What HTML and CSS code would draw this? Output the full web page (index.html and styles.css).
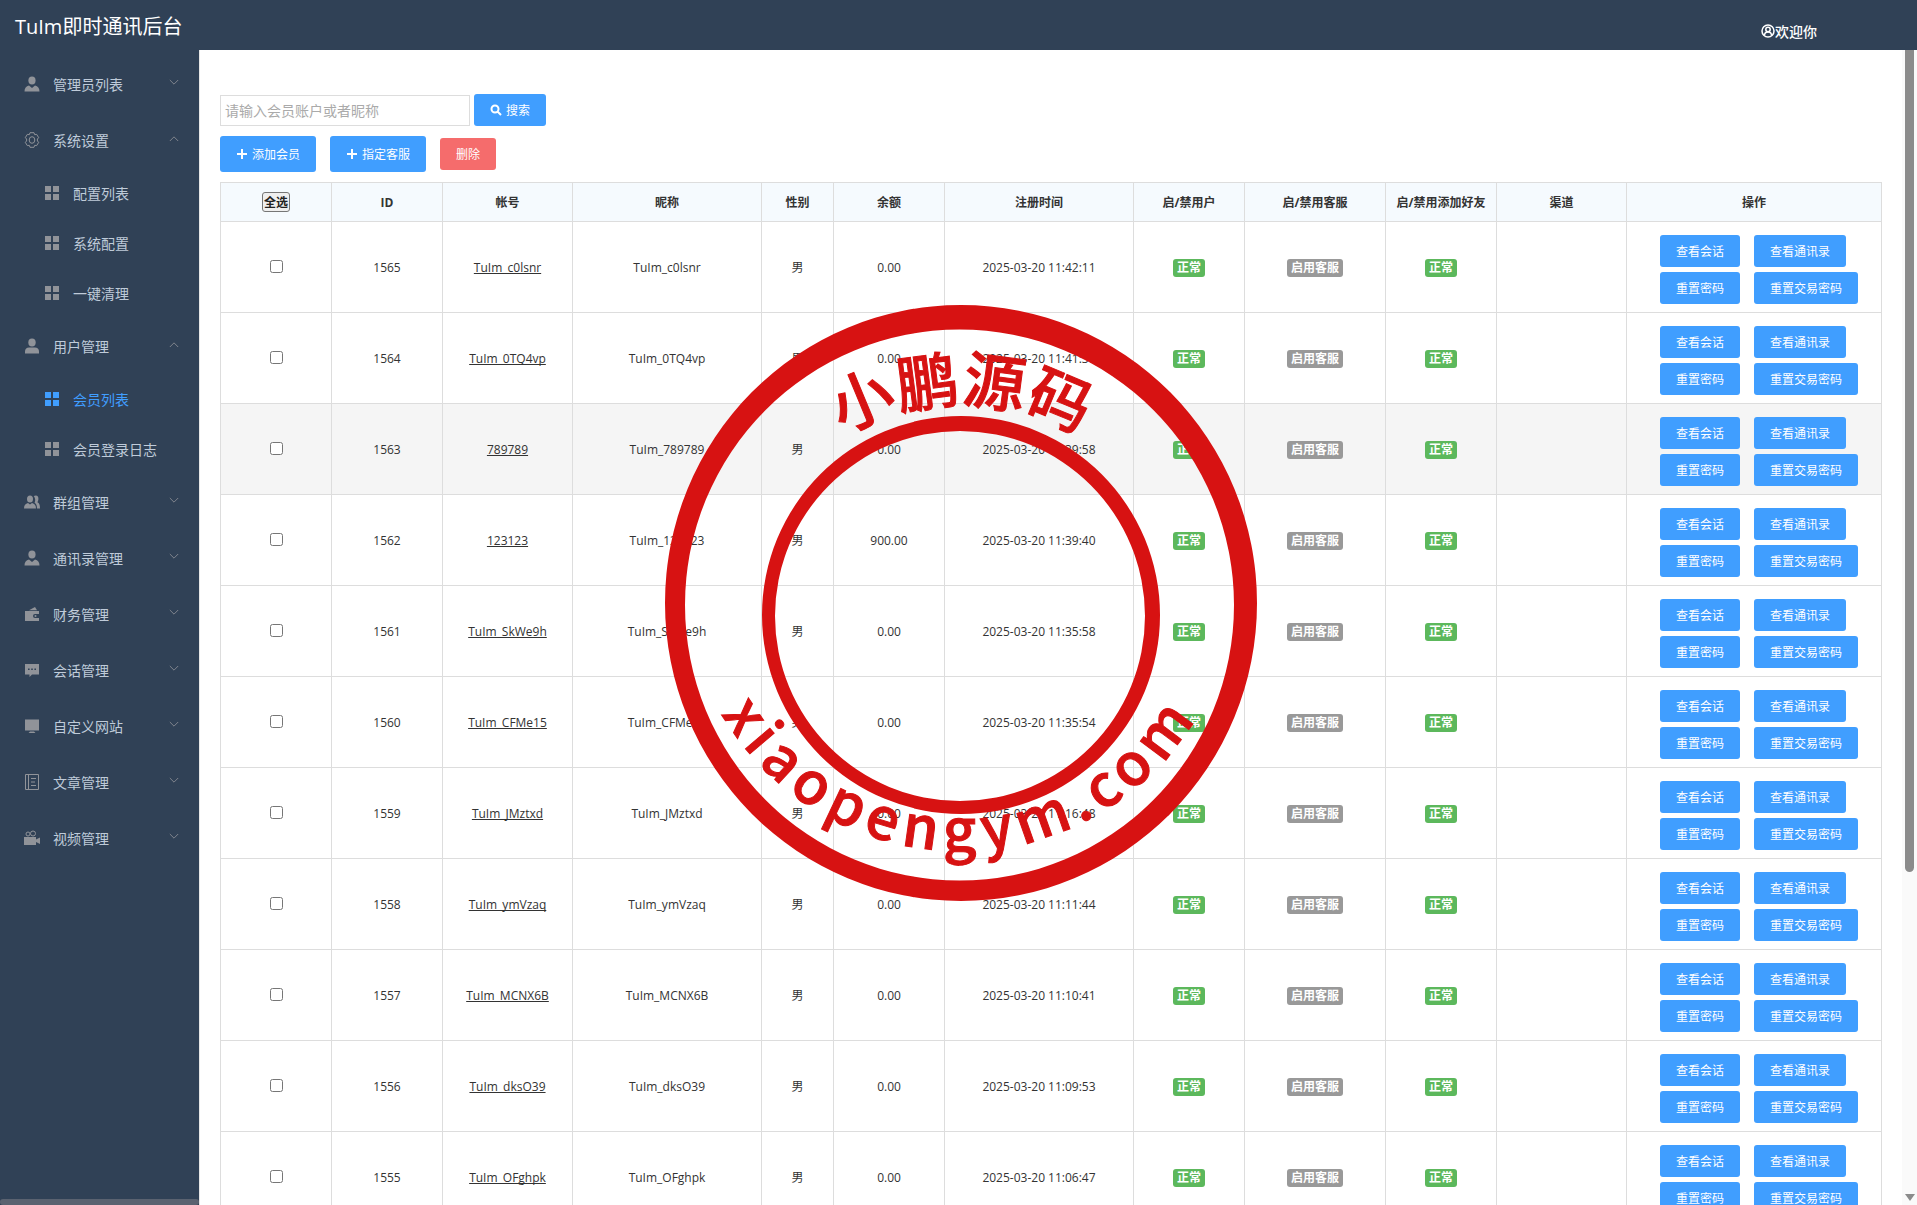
FILE: index.html
```html
<!DOCTYPE html>
<html lang="zh-CN">
<head>
    <meta charset="UTF-8">
    <meta name="viewport" content="width=device-width, initial-scale=1.0">
    <title>TuIm即时通讯后台</title>
    <link rel="stylesheet" href="styles.css">
</head>
<body>
    <svg width="0" height="0" class="sprite" aria-hidden="true">
        <symbol id="i-user" viewBox="0 0 16 16"><ellipse cx="8" cy="4.4" rx="3.6" ry="4"/><path d="M.5 15.4c0-3.2 1.600-5 4.500-5.800L8 12l3-2.400c2.900.8 4.500 2.600 4.500 5.800z"/></symbol>
        <symbol id="i-user-solid" viewBox="0 0 16 16"><ellipse cx="8" cy="4.4" rx="3.7" ry="4"/><path d="M1 15.400v-2c0-2.400 1.800-4 4-4h6c2.200 0 4 1.600 4 4v2z"/></symbol>
        <symbol id="i-gear" viewBox="0 0 16 16"><g fill="none" stroke="currentColor"><path d="M6 .7h4l.7 2 2-.3 2 3.300L13.400 7v2l1.300 1.300-2 3.300-2-.3-.7 2H6l-.7-2-2 .3-2-3.300L2.600 9V7L1.300 5.700l2-3.300 2 .3z"/><ellipse cx="8" cy="8" rx="2.800" ry="3.300"/></g></symbol>
        <symbol id="i-grid" viewBox="0 0 16 16"><path d="M1 1h6v6H1zM9 1h6v6H9zM1 9h6v6H1zM9 9h6v6H9z"/></symbol>
        <symbol id="i-group" viewBox="0 0 16 16"><ellipse cx="6" cy="5" rx="3" ry="3.600"/><path d="M0 14.500c0-3.300 1.500-4.900 4-5.500l2 1.500L8 9c2.500.6 4 2.200 4 5.500zM9.800 2c3-1.500 5 .4 4.600 3.200-.2 1.500-.6 2.300-1 3 1.800.8 2.600 2.600 2.600 6.300h-3c0-2.800-.6-4.700-2.400-5.800 1-2 .8-4.500-.8-6.700z"/></symbol>
        <symbol id="i-wallet" viewBox="0 0 16 16"><path d="M1 5h14v3h-4a2 2 0 0 0 0 4h4v3H1z"/><path d="M5 4.200 11 1l2 3.200z"/><circle cx="11.500" cy="10" r="1"/></symbol>
        <symbol id="i-chat" viewBox="0 0 16 16"><path fill-rule="evenodd" d="M1 2h14v10.500H8L5.500 15v-2.500H1zM4 6.500v1.600h1.600V6.500zm3.200 0v1.600h1.600V6.500zm3.200 0v1.600H12V6.500z"/></symbol>
        <symbol id="i-screen" viewBox="0 0 16 16"><path d="M1 1.500h14v11H1zM6 13.500h4l1.500 1.500h-7z"/></symbol>
        <symbol id="i-book" viewBox="0 0 16 16"><path fill="none" stroke="currentColor" d="M1.500.5h13v15h-13zM4.500.5v15M7 4.500h5M7 8h4M7 11.500h5"/></symbol>
        <symbol id="i-film" viewBox="0 0 16 16"><g fill="none" stroke="currentColor"><circle cx="4" cy="4" r="2"/><circle cx="9" cy="3.500" r="2.500"/></g><path d="M0 7h12v2.500L16 7.500V14l-4-2v3H0z"/></symbol>
        <symbol id="i-arrow" viewBox="0 0 12 8"><path fill="none" stroke="currentColor" d="m1 1 5 5 5-5"/></symbol>
        <symbol id="i-search" viewBox="0 0 12 12"><path fill="none" stroke="currentColor" stroke-width="2" d="M8.500 5a3.500 3.500 0 1 1-7 0 3.500 3.500 0 0 1 7 0M7.500 7.500 11 11"/></symbol>
        <symbol id="i-plus" viewBox="0 0 12 12"><path d="M5 1h2v4h4v2H7v4H5V7H1V5h4z"/></symbol>
        <symbol id="i-welcome" viewBox="0 0 14 14"><g fill="none" stroke="currentColor" stroke-width="1.500"><circle cx="7" cy="7" r="6"/><circle cx="7" cy="5.500" r="2.200"/><path d="M3.500 11.500c0-2.500 1.500-3.500 3.500-3.500s3.500 1 3.500 3.500"/></g></symbol>
    </svg>

    <header class="header">
        <div class="logo">TuIm即时通讯后台</div>
        <div class="welcome"><svg><use href="#i-welcome"/></svg>欢迎你</div>
    </header>

    <div class="container">
        <nav class="sidebar">
            <ul class="menu" id="menu"></ul>
            <div class="sidebar-scroll"></div>
        </nav>

        <main class="main">
            <form class="search">
                <input type="text" class="search-input" placeholder="请输入会员账户或者昵称" aria-label="请输入会员账户或者昵称">
                <button type="button" class="btn"><svg><use href="#i-search"/></svg>搜索</button>
            </form>
            <div class="toolbar">
                <button type="button" class="btn btn-lg"><svg><use href="#i-plus"/></svg>添加会员</button>
                <button type="button" class="btn btn-lg"><svg><use href="#i-plus"/></svg>指定客服</button>
                <button type="button" class="btn btn-danger">删除</button>
            </div>
            <table class="list">
                <colgroup>
                    <col class="c-sm"><col class="c-sm"><col class="c-md"><col class="c-lg"><col class="c-xs"><col class="c-sm">
                    <col class="c-lg"><col class="c-sm"><col class="c-kf"><col class="c-sm"><col class="c-md"><col class="c-op">
                </colgroup>
                <thead>
                    <tr>
                        <th><button type="button" class="check-all">全选</button></th>
                        <th>ID</th>
                        <th>帐号</th>
                        <th>昵称</th>
                        <th>性别</th>
                        <th>余额</th>
                        <th>注册时间</th>
                        <th>启/禁用户</th>
                        <th>启/禁用客服</th>
                        <th>启/禁用添加好友</th>
                        <th>渠道</th>
                        <th>操作</th>
                    </tr>
                </thead>
                <tbody id="rows"></tbody>
            </table>
        </main>

        <div class="scrollbar">
            <div class="thumb"></div>
            <div class="down"></div>
        </div>
    </div>

    <svg class="stamp" viewBox="0 0 599 601">
        <defs>
            <path id="arc-top" d="M65 338a237 237 0 0 1 474 0"/>
            <path id="arc-bottom" d="M25 273a276 276 0 0 0 552 0"/>
        </defs>
        <path fill-rule="evenodd" d="M6 301a296 298 0 0 1 592 0a296 298 0 0 1-592 0zM26 303a274 275 0 0 0 549 0a274 275 0 0 0-549 0z"/>
        <path fill-rule="evenodd" d="M103 313a199 199 0 0 1 398 0a199 199 0 0 1-398 0zM116 314a185 185 0 0 0 370 0a185 185 0 0 0-370 0z"/>
        <text><textPath href="#arc-top" startOffset="50%">小鹏源码</textPath></text>
        <text class="site"><textPath href="#arc-bottom" startOffset="50%">xiaopengym.com</textPath></text>
    </svg>

    <script>
        const menu = [
            ['user', '管理员列表'],
            ['gear', '系统设置', ['配置列表', '系统配置', '一键清理']],
            ['user-solid', '用户管理', ['会员列表', '会员登录日志']],
            ['group', '群组管理'],
            ['user', '通讯录管理'],
            ['wallet', '财务管理'],
            ['chat', '会话管理'],
            ['screen', '自定义网站'],
            ['book', '文章管理'],
            ['film', '视频管理']
        ];
        const icon = (name, cls) => `<svg class="${cls}"><use href="#i-${name}"/></svg>`;

        document.getElementById('menu').innerHTML = menu.map(([ico, name, sub]) => `
            <li>
                <a href="#" class="menu-title">${icon(ico, 'ico')}${name}${icon('arrow', sub ? 'arrow up' : 'arrow')}</a>
                ${sub ? '<ul>' + sub.map(s => `<li><a href="#" class="menu-item${s === '会员列表' ? ' active' : ''}">${icon('grid', 'ico')}${s}</a></li>`).join('') + '</ul>' : ''}
            </li>`).join('');

        // ID, 帐号, 昵称, 余额, 注册时间
        const users = [
            [1565, 'TuIm_c0lsnr', 'TuIm_c0lsnr', '0.00', '11:42:11'],
            [1564, 'TuIm_0TQ4vp', 'TuIm_0TQ4vp', '0.00', '11:41:37'],
            [1563, '789789', 'TuIm_789789', '0.00', '11:39:58'],
            [1562, '123123', 'TuIm_123123', '900.00', '11:39:40'],
            [1561, 'TuIm_SkWe9h', 'TuIm_SkWe9h', '0.00', '11:35:58'],
            [1560, 'TuIm_CFMe15', 'TuIm_CFMe15', '0.00', '11:35:54'],
            [1559, 'TuIm_JMztxd', 'TuIm_JMztxd', '0.00', '11:16:48'],
            [1558, 'TuIm_ymVzaq', 'TuIm_ymVzaq', '0.00', '11:11:44'],
            [1557, 'TuIm_MCNX6B', 'TuIm_MCNX6B', '0.00', '11:10:41'],
            [1556, 'TuIm_dksO39', 'TuIm_dksO39', '0.00', '11:09:53'],
            [1555, 'TuIm_OFghpk', 'TuIm_OFghpk', '0.00', '11:06:47']
        ];

        document.getElementById('rows').innerHTML = users.map(([id, account, nick, money, time]) => `
            <tr${id === 1563 ? ' class="hover"' : ''}>
                <td><input type="checkbox" aria-label="${id}"></td>
                <td>${id}</td>
                <td><a href="#">${account}</a></td>
                <td>${nick}</td>
                <td>男</td>
                <td>${money}</td>
                <td>2025-03-20 ${time}</td>
                <td><span class="label">正常</span></td>
                <td><span class="label label-gray">启用客服</span></td>
                <td><span class="label">正常</span></td>
                <td></td>
                <td class="ops">
                    <div><button type="button" class="btn">查看会话</button><button type="button" class="btn">查看通讯录</button></div>
                    <div><button type="button" class="btn">重置密码</button><button type="button" class="btn">重置交易密码</button></div>
                </td>
            </tr>`).join('');
    </script>
</body>
</html>
```
FILE: styles.css
```css
* {
    box-sizing: border-box;
}
body {
    margin: 0;
    height: 100vh;
    overflow: hidden;
    display: flex;
    flex-direction: column;
    font-family: "Open Sans", "Noto Sans CJK SC", sans-serif;
    font-size: 12px;
    color: #333;
    background: #fff;
}
svg {
    fill: currentColor;
}
.sprite {
    position: absolute;
}
button, input {
    font-family: inherit;
}
ul {
    list-style: none;
    margin: 0;
    padding: 0;
}

/* header */
.header {
    flex: none;
    height: 50px;
    display: flex;
    justify-content: space-between;
    align-items: center;
    padding: 0 100px 0 15px;
    background: #304156;
    color: #fff;
}
.logo {
    font-size: 20px;
}
.welcome {
    display: flex;
    align-items: center;
    padding-top: 12px;
    font-size: 14px;
    font-weight: 500;
}
.welcome svg {
    width: 14px;
    height: 14px;
}

.container {
    flex: 1;
    min-height: 0;
    display: flex;
}

/* sidebar */
.sidebar {
    flex: none;
    width: 200px;
    display: flex;
    flex-direction: column;
    justify-content: space-between;
    padding-top: 6px;
    background: #304156;
    border-right: 1px solid #e6e6e6;
}
.menu a {
    display: flex;
    align-items: center;
    gap: 13px;
    color: #bfcbd9;
    font-size: 14px;
    text-decoration: none;
}
.menu .menu-title {
    height: 56px;
    padding: 0 20px 0 24px;
}
.menu .menu-item {
    height: 50px;
    padding-left: 44px;
}
.menu .menu-item.active, .menu .active .ico {
    color: #409eff;
}
.ico {
    width: 16px;
    height: 16px;
    color: #909399;
}
.arrow {
    width: 10px;
    height: 7px;
    margin: 0 0 4px auto;
    color: #909399;
}
.arrow.up {
    transform: rotate(180deg);
}
.sidebar-scroll {
    height: 6px;
    border-radius: 3px;
    background: #5a6270;
}

/* content */
.main {
    flex: 1;
    overflow: hidden;
    padding: 44px 20px 0;
}
.search {
    display: flex;
    align-items: center;
    gap: 4px;
}
.search-input {
    width: 250px;
    height: 31px;
    padding: 0 4px;
    border: 1px solid #ddd;
    font-size: 14px;
}
.search-input::placeholder {
    color: #aaa;
}
.btn {
    height: 32px;
    padding: 0 16px;
    border: 0;
    border-radius: 3px;
    background: #409eff;
    color: #fff;
    font-size: 12px;
    white-space: nowrap;
}
.btn svg {
    width: 12px;
    height: 12px;
    margin-right: 4px;
    vertical-align: -1px;
}
.btn-lg {
    height: 36px;
}
.btn-danger {
    background: #f56c6c;
}
.toolbar {
    display: flex;
    align-items: center;
    gap: 14px;
    margin: 10px 0;
}

/* table */
.list {
    width: 100%;
    table-layout: fixed;
    border-collapse: collapse;
}
.c-xs { width: 72px; }
.c-sm { width: 111px; }
.c-md { width: 130px; }
.c-lg { width: 189px; }
.c-kf { width: 141px; }
.c-op { width: 255px; }
.list th, .list td {
    padding: 0;
    border: 1px solid #ddd;
    text-align: center;
}
.list th {
    height: 39px;
    background: #f5fafe;
    font-weight: bold;
    white-space: nowrap;
}
.list td {
    height: 91px;
}
.list td a {
    color: #333;
    text-decoration: underline;
    text-decoration-skip-ink: none;
}
.list input {
    margin: 2px 0 0;
}
.hover td {
    background: #f5f5f5;
}
.check-all {
    height: 20px;
    padding: 0 1px;
    border: 1px solid #767676;
    border-radius: 3px;
    background: #efefef;
    color: #222;
    font-size: 12px;
    font-weight: bold;
}
.label {
    display: inline-block;
    margin-top: 2px;
    padding: 0 4px;
    line-height: 18px;
    border-radius: 3px;
    background: #5cb85c;
    color: #fff;
    font-weight: bold;
}
.label-gray {
    background: #999;
}
.list .ops {
    padding: 13px 0 8px 33px;
}
.ops div {
    display: flex;
    gap: 14px;
}
.ops div + div {
    margin-top: 5px;
}

/* page scrollbar */
.scrollbar {
    flex: none;
    width: 15px;
    display: flex;
    flex-direction: column;
    justify-content: space-between;
    padding: 0 3px 4px;
    background: #fafafa;
}
.thumb {
    height: calc(100% * 5 / 7);
    border-radius: 0 0 5px 5px;
    background: #8b8b8b;
}
.down {
    border: 5px solid transparent;
    border-top: 7px solid #8b8b8b;
    border-bottom: 0;
}

/* stamp over the page */
.stamp {
    position: fixed;
    inset: 0;
    margin: auto;
    width: 599px;
    height: 601px;
    color: #d71212;
    pointer-events: none;
}
.stamp text {
    font-family: "Noto Sans CJK SC", sans-serif;
    font-size: 62px;
    font-weight: 500;
    text-anchor: middle;
    stroke: currentColor;
    stroke-width: 1px;
}
.stamp .site {
    font-size: 58px;
    letter-spacing: 7px;
}
```
